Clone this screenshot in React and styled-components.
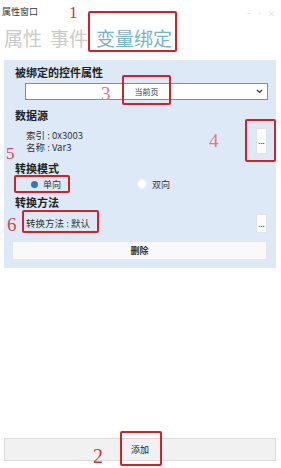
import React from "react";
import styled, { createGlobalStyle } from "styled-components";

const Global = createGlobalStyle`
  html, body { margin: 0; padding: 0; background: #fff; }
  body { font-family: "Noto Sans CJK SC", "Noto Sans", sans-serif; }
`;

const Window = styled.div`
  position: relative;
  width: 281px;
  height: 468px;
  display: flex;
  flex-direction: column;
  background: #fff;
  overflow: hidden;
`;

const TitleBar = styled.div`
  height: 22px;
  display: flex;
  align-items: center;
  justify-content: space-between;
  padding: 0 6px 0 2px;
  font-size: 9px;
  color: #333;
`;

const Controls = styled.div`
  display: flex;
  gap: 5px;
  font-size: 7px;
  color: #cfcfcf;
  padding-top: 4px;
`;

const Tabs = styled.div`
  display: flex;
  gap: 8px;
  padding-left: 4px;
  height: 30px;
  align-items: center;
  font-size: 19px;
  line-height: 1;
`;

const Tab = styled.span`
  color: ${(p) => (p.$active ? "#7cb2c6" : "#cacaca")};
`;

const Panel = styled.div`
  margin: 8px 5px 0 4px;
  background: #dde9f7;
  padding: 5px 8px 8px 11px;
  display: flex;
  flex-direction: column;
`;

const Heading = styled.div`
  font-size: 11px;
  font-weight: bold;
  color: #222;
  line-height: 14px;
  margin-top: ${(p) => p.$mt || 0}px;
`;

const Select = styled.div`
  margin: 4px 0 0 10px;
  height: 17px;
  background: #fff;
  border: 1px solid #8a8a8a;
  box-sizing: border-box;
  display: flex;
  align-items: center;
  justify-content: center;
  position: relative;
  font-size: 8px;
  color: #333;
`;

const Chevron = styled.svg`
  position: absolute;
  right: 4px;
  top: 5px;
`;

const SourceRow = styled.div`
  display: flex;
  align-items: center;
  justify-content: space-between;
  margin-top: 6px;
`;

const InfoText = styled.div`
  font-size: 9.5px;
  color: #333;
  line-height: 12.5px;
  padding-left: 11px;
`;

const DotsBtn = styled.div`
  width: 11px;
  height: ${(p) => p.$h}px;
  background: #fbfbfb;
  border: 1px solid #e2e2e2;
  box-sizing: border-box;
  display: flex;
  align-items: center;
  justify-content: center;
  font-size: 8px;
  line-height: 1;
  color: #222;
  margin-right: 1px;
`;

const RadioRow = styled.div`
  display: grid;
  grid-template-columns: 122px 1fr;
  margin-top: 2px;
  height: 14px;
  align-items: center;
`;

const RadioItem = styled.div`
  display: flex;
  align-items: center;
  gap: 5px;
  padding-left: ${(p) => p.$pl || 0}px;
  font-size: 9px;
  color: #333;
`;

const RadioDot = styled.span`
  flex: none;
  width: ${(p) => (p.$on ? 7 : 10)}px;
  height: ${(p) => (p.$on ? 7 : 10)}px;
  border-radius: 50%;
  background: ${(p) => (p.$on ? "#2f79b4" : "#fff")};
  border: ${(p) => (p.$on ? "none" : "1px solid #eef2f7")};
  box-sizing: border-box;
`;

const MethodRow = styled.div`
  display: flex;
  align-items: center;
  justify-content: space-between;
  margin-top: 5px;
`;

const DeleteBtn = styled.div`
  margin: 8px 1px 0 -3px;
  height: 19px;
  background: #f9f9f9;
  border: 1px solid #e4e4e4;
  box-sizing: border-box;
  display: flex;
  align-items: center;
  justify-content: center;
  font-size: 9px;
  font-weight: bold;
  color: #333;
`;

const Spacer = styled.div`
  flex: 1;
`;

const AddBtn = styled.div`
  margin: 0 5px 7px 4px;
  height: 23px;
  background: #f1f1f1;
  border: 1px solid #dcdcdc;
  box-sizing: border-box;
  display: flex;
  align-items: center;
  justify-content: center;
  font-size: 9px;
  color: #222;
`;

const Mark = styled.div`
  position: absolute;
  left: ${(p) => p.$x}px;
  top: ${(p) => p.$y}px;
  width: ${(p) => p.$w}px;
  height: ${(p) => p.$h}px;
  border: 2px solid #d0222a;
  border-radius: 2px;
  box-sizing: border-box;
  pointer-events: none;
`;

const Num = styled.div`
  position: absolute;
  left: ${(p) => p.$x}px;
  top: ${(p) => p.$y}px;
  font-family: "Liberation Serif", serif;
  font-size: ${(p) => p.$s || 18}px;
  line-height: 1;
  color: ${(p) => p.$c || "#c23a44"};
`;

export default function App() {
  return (
    <Window>
      <Global />
      <TitleBar>
        <span>属性窗口</span>
        <Controls>
          <span>−</span>
          <span>▫</span>
          <span>×</span>
        </Controls>
      </TitleBar>
      <Tabs>
        <Tab>属性</Tab>
        <Tab>事件</Tab>
        <Tab $active>变量绑定</Tab>
      </Tabs>
      <Panel>
        <Heading>被绑定的控件属性</Heading>
        <Select>
          当前页
          <Chevron width="7" height="5" viewBox="0 0 7 5">
            <path d="M1 1 L3.5 3.5 L6 1" stroke="#333" strokeWidth="1.2" fill="none" />
          </Chevron>
        </Select>
        <Heading $mt={8}>数据源</Heading>
        <SourceRow>
          <InfoText>
            <div>索引 : 0x3003</div>
            <div>名称 : Var3</div>
          </InfoText>
          <DotsBtn $h={26}>...</DotsBtn>
        </SourceRow>
        <Heading $mt={7}>转换模式</Heading>
        <RadioRow>
          <RadioItem $pl={16}>
            <RadioDot $on />
            单向
          </RadioItem>
          <RadioItem>
            <RadioDot />
            双向
          </RadioItem>
        </RadioRow>
        <Heading $mt={4}>转换方法</Heading>
        <MethodRow>
          <InfoText>转换方法 : 默认</InfoText>
          <DotsBtn $h={19}>...</DotsBtn>
        </MethodRow>
        <DeleteBtn>删除</DeleteBtn>
      </Panel>
      <Spacer />
      <AddBtn>添加</AddBtn>

      <Num $x={69} $y={4} $s={17}>1</Num>
      <Mark $x={88} $y={11} $w={89} $h={41} />
      <Num $x={101} $y={84} $s={19} $c="#e07a80">3</Num>
      <Mark $x={122} $y={75} $w={49} $h={30} />
      <Num $x={209} $y={131} $s={19} $c="#e07a80">4</Num>
      <Mark $x={245} $y={119} $w={31} $h={43} />
      <Num $x={6} $y={145} $s={17} $c="#d44">5</Num>
      <Mark $x={14} $y={175} $w={56} $h={18} />
      <Num $x={7} $y={215} $s={19} $c="#d44">6</Num>
      <Mark $x={22} $y={210} $w={77} $h={23} />
      <Num $x={93} $y={446} $s={20} $c="#c3343c">2</Num>
      <Mark $x={120} $y={431} $w={42} $h={35} />
    </Window>
  );
}
